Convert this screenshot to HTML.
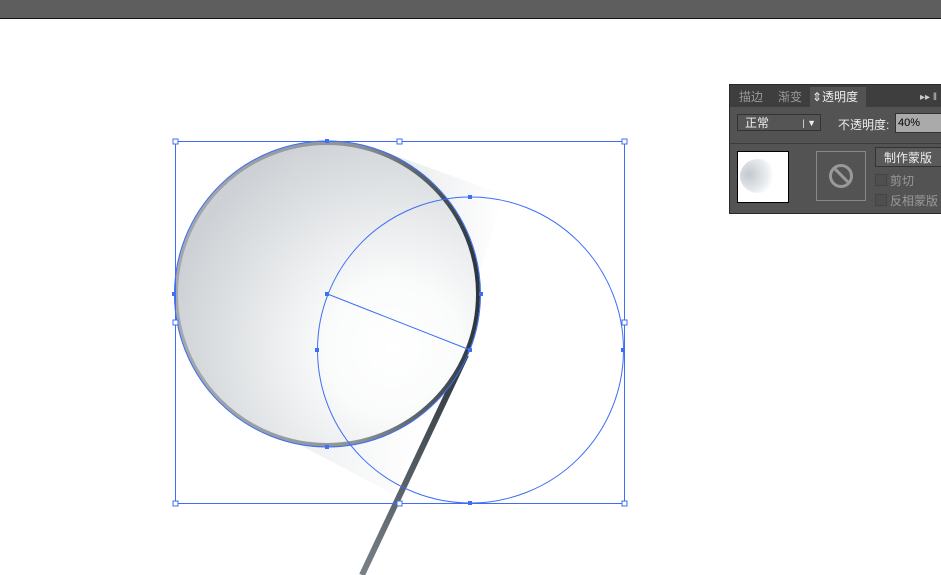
<!DOCTYPE html>
<html><head><meta charset="utf-8"><style>
body{margin:0;width:941px;height:575px;overflow:hidden;background:#fff;position:relative;font-family:"Liberation Sans","Noto Sans CJK SC",sans-serif}
.top{position:absolute;left:0;top:0;width:941px;height:18px;background:#5e5e5e;border-bottom:1px solid #111}
.p{position:absolute;left:729px;top:84px;width:212px;height:128px;background:#535353;border:1px solid #2a2a2a;border-right:none;font-size:12px;color:#ddd}
.tabs{position:absolute;left:0;top:0;width:212px;height:22px;background:#3e3e3e}
.t{position:absolute;top:3px;height:19px;line-height:19px;color:#999}
.a{position:absolute;top:2px;left:80px;width:54px;height:20px;background:#535353;color:#eee;line-height:20px;padding-left:2px}
.box{position:absolute;border:1px solid #2b2b2b;background:#4c4c4c}
.chk{position:absolute;width:10px;height:10px;border:1px solid #444;background:#4f4f4f}
</style></head><body>
<div class="top"></div>
<svg width="941" height="575" style="position:absolute;left:0;top:0">
<defs>
<radialGradient id="fill" cx="0.72" cy="0.68" r="0.75"><stop offset="0" stop-color="#fff"/><stop offset="0.3" stop-color="#fafbfb"/><stop offset="1" stop-color="#cdd1d5"/></radialGradient>
<linearGradient id="ring" x1="0" y1="0" x2="1" y2="0"><stop offset="0" stop-color="#a4a9ae"/><stop offset="0.6" stop-color="#8d9399"/><stop offset="1" stop-color="#2c353c"/></linearGradient>
<linearGradient id="cone" x1="0" y1="0" x2="1" y2="0"><stop offset="0" stop-color="#d4d8dc"/><stop offset="1" stop-color="#fff"/></linearGradient>
<linearGradient id="hd" x1="0" y1="0" x2="0" y2="1"><stop offset="0" stop-color="#2b343b"/><stop offset="1" stop-color="#788088"/></linearGradient>
</defs>
<polygon points="380,150 505,195 470,300" fill="url(#cone)" opacity="0.6"/>
<polygon points="300,445 395,495 420,420" fill="url(#cone)" opacity="0.4"/>
<line x1="466" y1="355" x2="362" y2="575" stroke="url(#hd)" stroke-width="6"/>
<circle cx="327" cy="294" r="151" fill="url(#fill)" stroke="url(#ring)" stroke-width="4"/>
<g stroke="#3d6ef5" fill="none" stroke-width="1">
<rect x="175.5" y="141.5" width="449" height="362"/>
<circle cx="327.5" cy="294" r="153"/>
<circle cx="470.5" cy="350" r="153"/>
<line x1="327.5" y1="294" x2="470" y2="350"/>
</g>
<g fill="#fff" stroke="#3d6ef5">
<rect x="173" y="139" width="5" height="5"/><rect x="397" y="139" width="5" height="5"/><rect x="622" y="139" width="5" height="5"/>
<rect x="173" y="320" width="5" height="5"/><rect x="622" y="320" width="5" height="5"/>
<rect x="173" y="501" width="5" height="5"/><rect x="397" y="501" width="5" height="5"/><rect x="622" y="501" width="5" height="5"/>
</g>
<g fill="#3d6ef5">
<rect x="325" y="139" width="4" height="4"/><rect x="325" y="445" width="4" height="4"/><rect x="172" y="292" width="4" height="4"/><rect x="479" y="292" width="4" height="4"/>
<rect x="325" y="292" width="4" height="4"/><rect x="468" y="195" width="4" height="4"/><rect x="468" y="501" width="4" height="4"/><rect x="315" y="348" width="4" height="4"/><rect x="621" y="348" width="4" height="4"/><rect x="468" y="348" width="4" height="4"/>
</g>
</svg>
<div class="p">
<div class="tabs"><span class="t" style="left:9px">描边</span><span class="t" style="left:48px">渐变</span><div class="a">⇕透明度</div><span class="t" style="left:190px;color:#ccc;font-size:10px">▸▸ ‖</span></div>
<div class="box" style="left:7px;top:29px;width:84px;height:17px;background:#555;border-color:#333;line-height:17px;padding-left:7px;box-sizing:border-box;color:#eee">正常<span style="position:absolute;right:4px;font-size:9px">| ▼</span></div>
<span style="position:absolute;left:108px;top:31px;color:#eee">不透明度:</span>
<div style="position:absolute;left:165px;top:28px;width:45px;height:18px;background:#aaa;border:1px solid #333;color:#000;font-size:11px;line-height:18px;padding-left:2px">40%</div>
<div style="position:absolute;left:0;top:58px;width:212px;height:1px;background:#3c3c3c"></div>
<div class="box" style="left:7px;top:66px;width:50px;height:50px;background:#fff;border:1px solid #000;overflow:hidden"><div style="position:absolute;left:2px;top:7px;width:36px;height:34px;border-radius:50%;background:radial-gradient(circle at 25% 45%,#c2c8ce,#eef0f2 60%,#fff 75%)"></div></div>
<div class="box" style="left:86px;top:66px;width:48px;height:48px;border-color:#888;background:#535353"><div style="position:absolute;left:12px;top:12px;width:18px;height:18px;border:3px solid #999;border-radius:50%"></div><div style="position:absolute;left:13px;top:22px;width:23px;height:3px;background:#999;transform:rotate(45deg)"></div></div>
<div class="box" style="left:145px;top:62px;width:70px;height:20px;background:#5a5a5a;border-color:#333;line-height:20px;padding-left:8px;box-sizing:border-box;color:#eee">制作蒙版</div>
<div class="chk" style="left:145px;top:89px"></div><span style="position:absolute;left:160px;top:87px;color:#999">剪切</span>
<div class="chk" style="left:145px;top:109px"></div><span style="position:absolute;left:160px;top:107px;color:#999">反相蒙版</span>
</div>
</body></html>
